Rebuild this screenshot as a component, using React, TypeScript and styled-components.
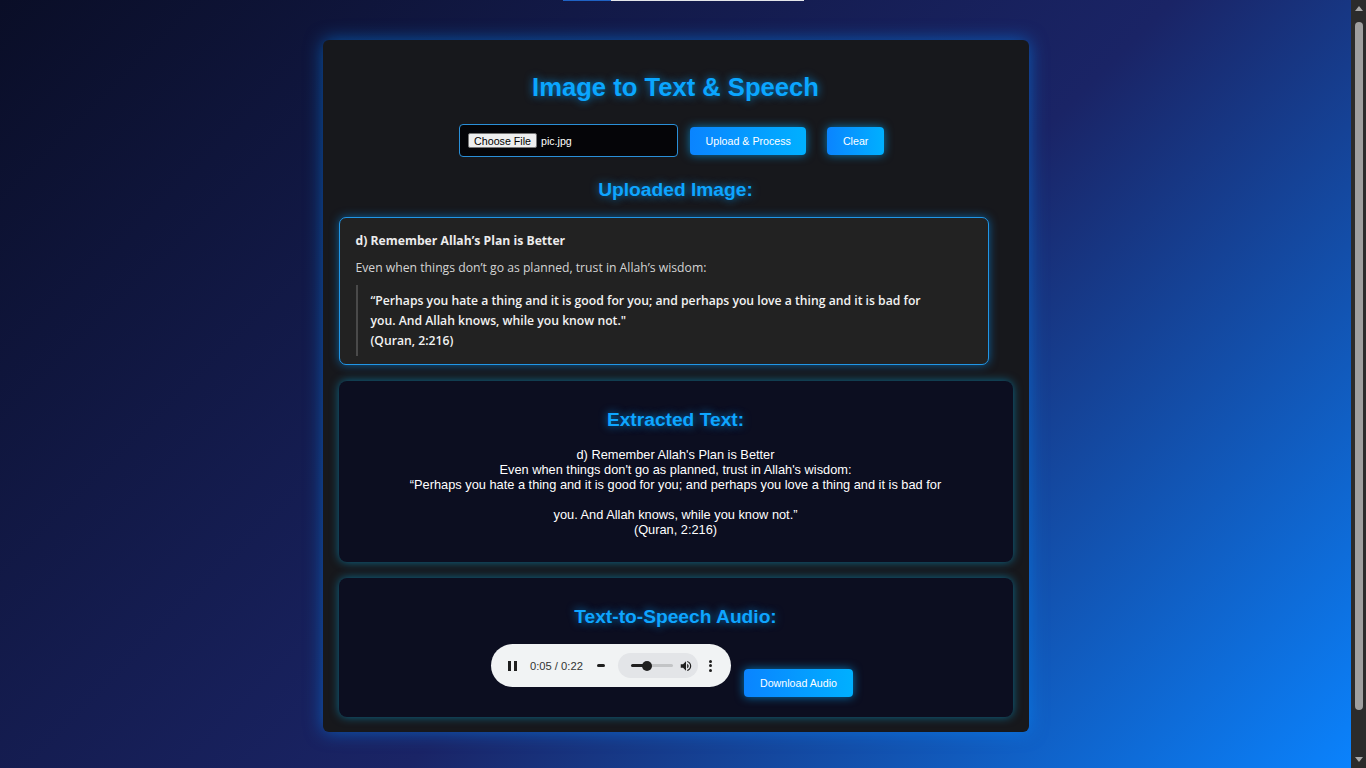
import React from "react";
import styled, { createGlobalStyle } from "styled-components";

const GlobalStyle = createGlobalStyle`
  html {
    background: linear-gradient(135deg, #0a0e27 0%, #1a2466 55%, #0a84ff 100%) fixed;
    overflow: hidden;
  }
  body {
    margin: 0;
    font-family: "Liberation Sans", Arial, sans-serif;
    color: #ffffff;
    overflow: hidden;
  }
  * { box-sizing: border-box; }
`;

const Page = styled.div`
  padding: 0 15px 0 0;
  height: 100vh;
`;

const TopStrip = styled.div`
  width: 241px;
  height: 1px;
  margin-left: calc(50% - 112.5px);
  background: linear-gradient(90deg, #1f62c4 0 48px, #e4e6ea 48px 100%);
`;

const Card = styled.main`
  width: 706px;
  margin: 39px auto 0;
  padding: 32px 16px 15px;
  background: #17181c;
  border-radius: 6px;
  box-shadow: 0 0 18px rgba(0, 140, 255, 0.55);
  display: flex;
  flex-direction: column;
`;

const Title = styled.h1`
  margin: 0;
  font-size: 25.6px;
  line-height: 30px;
  font-weight: 700;
  text-align: center;
  color: #0aa6ff;
  text-shadow: 0 0 8px rgba(0, 160, 255, 0.75);
`;

const UploadRow = styled.div`
  margin-top: 22px;
  height: 33px;
  display: flex;
  align-items: center;
  justify-content: center;
`;

const FileField = styled.div`
  width: 219px;
  height: 33px;
  margin-right: 12px;
  padding-left: 8px;
  display: flex;
  align-items: center;
  gap: 4px;
  background: #050508;
  border: 1px solid #2a8fd8;
  border-radius: 4px;
  font-size: 10.67px;
`;

const FileButton = styled.span`
  height: 15px;
  padding: 0 5px;
  display: inline-flex;
  align-items: center;
  background: #efefef;
  border: 1px solid #767676;
  border-radius: 2px;
  color: #000;
`;

const FileName = styled.span`
  color: #ffffff;
`;

const ActionButton = styled.button<{ $after?: number; $before?: number; $top?: number }>`
  height: 28px;
  padding: 0 15.5px;
  margin: ${(p) => p.$top ?? 0}px ${(p) => p.$after ?? 0}px 0 ${(p) => p.$before ?? 0}px;
  border: none;
  border-radius: 4px;
  background: linear-gradient(90deg, #0a84ff, #00b0ff);
  box-shadow: 0 0 10px rgba(0, 170, 255, 0.65);
  color: #ffffff;
  font-family: "Liberation Sans", Arial, sans-serif;
  font-size: 10.67px;
  white-space: nowrap;
  cursor: pointer;
`;

const SectionHeading = styled.h3<{ $top?: number }>`
  margin: ${(p) => p.$top ?? 0}px 0 0;
  font-size: 19.2px;
  line-height: 22px;
  font-weight: 700;
  text-align: center;
  color: #0ea5ff;
  text-shadow: 0 0 8px rgba(0, 160, 255, 0.75);
`;

const ImagePreview = styled.div`
  margin-top: 16px;
  width: 650px;
  height: 148px;
  padding: 14px 16px 0;
  background: #222222;
  border: 1px solid #2196e6;
  border-radius: 7px;
  box-shadow: 0 0 10px rgba(0, 150, 255, 0.55);
  font-family: "Open Sans", "Noto Sans", sans-serif;
  font-size: 12.2px;
`;

const ImgHeading = styled.div`
  line-height: 18px;
  font-weight: 700;
  color: #ececec;
`;

const ImgPara = styled.div`
  margin-top: 9px;
  line-height: 18px;
  color: #d4d4d4;
`;

const ImgQuote = styled.div`
  margin-top: 8px;
  padding: 6px 0 5px 13px;
  border-left: 2px solid #4a4a4a;
  line-height: 20px;
  font-weight: 600;
  color: #f2f2f2;
`;

const Panel = styled.section<{ $pb: number }>`
  margin-top: 16px;
  padding: 28px 16px ${(p) => p.$pb}px;
  background: #0c0e20;
  border-radius: 8px;
  box-shadow: 0 0 10px rgba(0, 190, 255, 0.5);
`;

const ExtractedText = styled.div`
  margin-top: 16px;
  font-size: 12.8px;
  line-height: 15px;
  text-align: center;
  white-space: pre-line;
  color: #ffffff;
`;

const AudioRow = styled.div`
  margin-top: 16px;
  padding-right: 7px;
  display: flex;
  align-items: flex-start;
  justify-content: center;
`;

const Player = styled.div`
  width: 240px;
  height: 43px;
  padding-left: 17px;
  display: flex;
  align-items: center;
  background: #f1f3f4;
  border-radius: 22px;
  color: #1f1f1f;
  font-size: 11.2px;
`;

const Time = styled.span`
  margin-left: 12.5px;
  color: #333333;
  white-space: nowrap;
`;

const Timeline = styled.span`
  margin-left: 14px;
  width: 8px;
  height: 3px;
  border-radius: 2px;
  background: #1f1f1f;
`;

const VolumePill = styled.div`
  margin-left: 13px;
  width: 80px;
  height: 25px;
  padding-left: 13px;
  display: flex;
  align-items: center;
  border-radius: 13px;
  background: #e3e5e8;
`;

const VolumeTrack = styled.div`
  position: relative;
  width: 42px;
  height: 3px;
  border-radius: 2px;
  background: linear-gradient(90deg, #1f1f1f 0 16px, #c2c4c6 16px 100%);
`;

const VolumeThumb = styled.span`
  position: absolute;
  left: 11px;
  top: -3.5px;
  width: 10px;
  height: 10px;
  border-radius: 50%;
  background: #1f1f1f;
`;

const SpeakerIcon = styled.svg`
  margin-left: 6px;
  width: 14px;
  height: 14px;
  fill: #1f1f1f;
`;

const MenuDots = styled.div`
  margin-left: 11px;
  display: flex;
  flex-direction: column;
  gap: 1.5px;
  span {
    width: 3px;
    height: 3px;
    border-radius: 50%;
    background: #1f1f1f;
  }
`;

/* Browser scrollbar drawn over the right edge of the window */
const ScrollTrack = styled.div`
  position: fixed;
  top: 0;
  right: 0;
  width: 15px;
  height: 100vh;
  background: #2b2b2b;
  display: flex;
  flex-direction: column;
  align-items: center;
`;

const ScrollArrow = styled.div`
  height: 17px;
  width: 15px;
  display: flex;
  align-items: center;
  justify-content: center;
`;

const ScrollThumb = styled.div`
  margin-top: 5px;
  width: 8px;
  height: 688px;
  border-radius: 4px;
  background: #9f9f9f;
`;

const ScrollSpacer = styled.div`
  flex: 1;
`;

const extracted =
  "d) Remember Allah's Plan is Better\nEven when things don't go as planned, trust in Allah's wisdom:\n\u201CPerhaps you hate a thing and it is good for you; and perhaps you love a thing and it is bad for\n\nyou. And Allah knows, while you know not.\u201D\n(Quran, 2:216)";

export default function App() {
  return (
    <>
      <GlobalStyle />
      <Page>
        <TopStrip />
        <Card>
          <Title>Image to Text &amp; Speech</Title>
          <UploadRow>
            <FileField>
              <FileButton>Choose File</FileButton>
              <FileName>pic.jpg</FileName>
            </FileField>
            <ActionButton $after={21}>Upload &amp; Process</ActionButton>
            <ActionButton $after={8}>Clear</ActionButton>
          </UploadRow>

          <SectionHeading $top={22}>Uploaded Image:</SectionHeading>
          <ImagePreview>
            <ImgHeading>d) Remember Allah’s Plan is Better</ImgHeading>
            <ImgPara>Even when things don’t go as planned, trust in Allah’s wisdom:</ImgPara>
            <ImgQuote>
              “Perhaps you hate a thing and it is good for you; and perhaps you love a thing and it is bad for
              <br />
              you. And Allah knows, while you know not."
              <br />
              (Quran, 2:216)
            </ImgQuote>
          </ImagePreview>

          <Panel $pb={25}>
            <SectionHeading>Extracted Text:</SectionHeading>
            <ExtractedText>{extracted}</ExtractedText>
          </Panel>

          <Panel $pb={20}>
            <SectionHeading>Text-to-Speech Audio:</SectionHeading>
            <AudioRow>
              <Player>
                <svg width="9" height="10" viewBox="0 0 9 10">
                  <rect x="0" y="0" width="3" height="10" fill="#1f1f1f" />
                  <rect x="6" y="0" width="3" height="10" fill="#1f1f1f" />
                </svg>
                <Time>0:05 / 0:22</Time>
                <Timeline />
                <VolumePill>
                  <VolumeTrack>
                    <VolumeThumb />
                  </VolumeTrack>
                  <SpeakerIcon viewBox="0 0 24 24">
                    <path d="M3 9v6h4l5 5V4L7 9H3zm13.5 3c0-1.770-1.020-3.290-2.500-4.030v8.050c1.480-.730 2.500-2.250 2.500-4.020zM14 3.230v2.060c2.890.860 5 3.540 5 6.710s-2.110 5.850-5 6.710v2.060c4.010-.910 7-4.490 7-8.770s-2.990-7.860-7-8.770z" />
                  </SpeakerIcon>
                </VolumePill>
                <MenuDots>
                  <span />
                  <span />
                  <span />
                </MenuDots>
              </Player>
              <ActionButton $before={13} $top={25}>
                Download Audio
              </ActionButton>
            </AudioRow>
          </Panel>
        </Card>
      </Page>
      <ScrollTrack>
        <ScrollArrow>
          <svg width="8" height="5" viewBox="0 0 8 5">
            <path d="M0 5 L4 0 L8 5 Z" fill="#a8a8a8" />
          </svg>
        </ScrollArrow>
        <ScrollThumb />
        <ScrollSpacer />
        <ScrollArrow>
          <svg width="8" height="5" viewBox="0 0 8 5">
            <path d="M0 0 L8 0 L4 5 Z" fill="#a8a8a8" />
          </svg>
        </ScrollArrow>
      </ScrollTrack>
    </>
  );
}
